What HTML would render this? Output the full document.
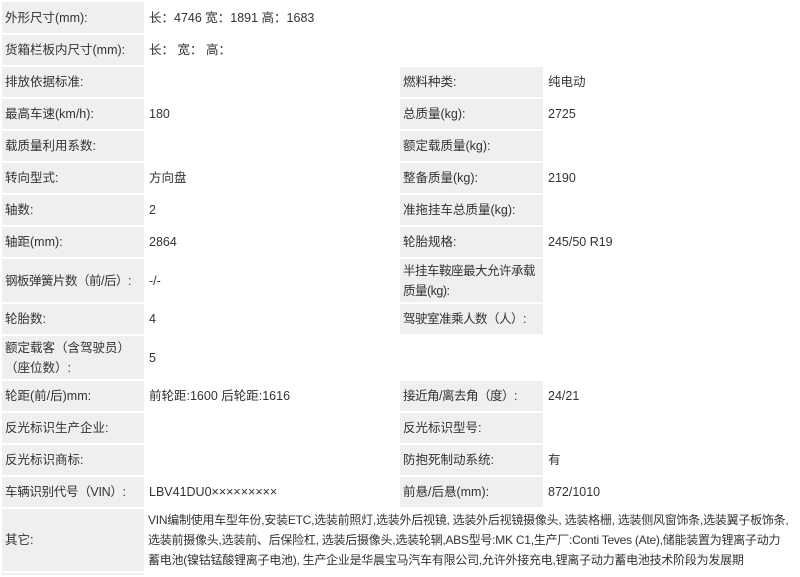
<!DOCTYPE html>
<html><head><meta charset="utf-8"><style>
body{margin:0;width:800px;height:572px;overflow:hidden;background:#fff;font-family:"Liberation Sans","Noto Sans CJK SC",sans-serif;font-size:12.5px;color:#333;}
table{border-collapse:collapse;table-layout:fixed;width:800px;position:absolute;top:0;left:0;}
td{border:2px solid #fff;padding:0 0 0 3px;vertical-align:middle;line-height:20px;}
td.l{background:#efefef;}
td.v{background:#fff;}
tr{height:32px;}
</style></head><body>
<table>
<colgroup><col style="width:144px"><col style="width:254px"><col style="width:145px"><col style="width:257px"></colgroup>
<tr style="height:33px"><td class="l">外形尺寸(mm):</td><td class="v" colspan="3">长：4746 宽：1891 高：1683</td></tr>
<tr><td class="l">货箱栏板内尺寸(mm):</td><td class="v" colspan="3">长： 宽： 高：</td></tr>
<tr><td class="l">排放依据标准:</td><td class="v"></td><td class="l">燃料种类:</td><td class="v">纯电动</td></tr>
<tr><td class="l">最高车速(km/h):</td><td class="v">180</td><td class="l">总质量(kg):</td><td class="v">2725</td></tr>
<tr><td class="l">载质量利用系数:</td><td class="v"></td><td class="l">额定载质量(kg):</td><td class="v"></td></tr>
<tr><td class="l">转向型式:</td><td class="v">方向盘</td><td class="l">整备质量(kg):</td><td class="v">2190</td></tr>
<tr><td class="l">轴数:</td><td class="v">2</td><td class="l">准拖挂车总质量(kg):</td><td class="v"></td></tr>
<tr><td class="l">轴距(mm):</td><td class="v">2864</td><td class="l">轮胎规格:</td><td class="v">245/50 R19</td></tr>
<tr style="height:45px"><td class="l" style="letter-spacing:-0.5px">钢板弹簧片数（前/后）:</td><td class="v">-/-</td><td class="l" style="letter-spacing:-0.5px">半挂车鞍座最大允许承载质量(kg):</td><td class="v"></td></tr>
<tr><td class="l">轮胎数:</td><td class="v">4</td><td class="l" style="letter-spacing:-0.5px">驾驶室准乘人数（人）:</td><td class="v"></td></tr>
<tr style="height:45px"><td class="l">额定载客（含驾驶员）（座位数）:</td><td class="v" colspan="3">5</td></tr>
<tr><td class="l">轮距(前/后)mm:</td><td class="v">前轮距:1600 后轮距:1616</td><td class="l" style="letter-spacing:-0.5px">接近角/离去角（度）:</td><td class="v">24/21</td></tr>
<tr><td class="l">反光标识生产企业:</td><td class="v"></td><td class="l">反光标识型号:</td><td class="v"></td></tr>
<tr><td class="l">反光标识商标:</td><td class="v"></td><td class="l">防抱死制动系统:</td><td class="v">有</td></tr>
<tr><td class="l" style="letter-spacing:-0.3px">车辆识别代号（VIN）:</td><td class="v">LBV41DU0×××××××××</td><td class="l">前悬/后悬(mm):</td><td class="v">872/1010</td></tr>
<tr style="height:64px"><td class="l">其它:</td><td class="v" colspan="3" style="line-height:20px;font-size:12px;letter-spacing:-0.25px;padding-left:2px;white-space:nowrap;overflow:hidden">VIN编制使用车型年份,安装ETC,选装前照灯,选装外后视镜, 选装外后视镜摄像头, 选装格栅, 选装侧风窗饰条,选装翼子板饰条,<br>选装前摄像头,选装前、后保险杠, 选装后摄像头,选装轮辋,ABS型号:MK C1,生产厂:Conti Teves (Ate),储能装置为锂离子动力<br>蓄电池(镍钴锰酸锂离子电池), 生产企业是华晨宝马汽车有限公司,允许外接充电,锂离子动力蓄电池技术阶段为发展期</td></tr>
<tr style="height:4px"><td class="l" style="padding:0"></td><td colspan="3" style="padding:0"></td></tr>
</table>
</body></html>
